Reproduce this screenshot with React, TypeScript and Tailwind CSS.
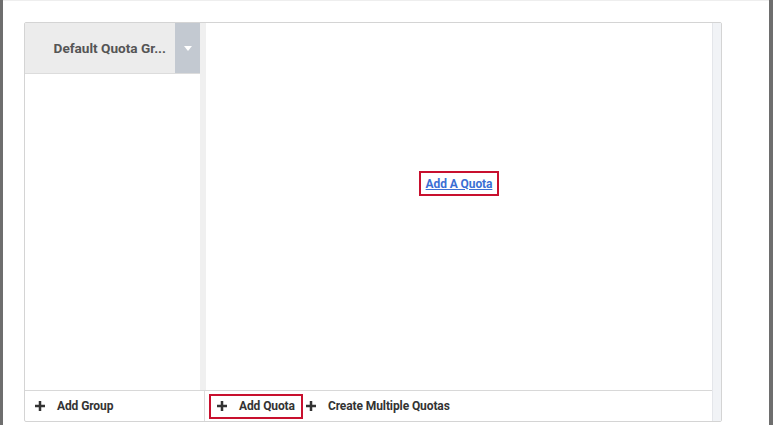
function PlusMark() {
  return (
    <svg width="10" height="10" viewBox="0 0 10 10" className="shrink-0">
      <rect x="3.75" y="0" width="2.5" height="10" fill="#333" />
      <rect x="0" y="3.75" width="10" height="2.5" fill="#333" />
    </svg>
  )
}

function FooterAction({ label, boxed }: { label: string; boxed?: boolean }) {
  return (
    <div
      className={
        boxed
          ? "flex items-center gap-[12px] h-[25px] px-[6px] border-2 border-[#c8102e]"
          : "flex items-center gap-[12px] h-[25px] px-[2px]"
      }
    >
      <PlusMark />
      <span className="text-[12px] font-bold text-[#333] tracking-[-0.1px]">{label}</span>
    </div>
  )
}

export default function App() {
  return (
    <div
      className="w-[773px] h-[425px] bg-[#6e6e6e] flex overflow-hidden"
      style={{ fontFamily: "Roboto, 'Liberation Sans', sans-serif" }}
    >
      {/* modal body */}
      <div className="ml-[3px] w-[766px] h-full bg-white border-t border-[#eeeeee] pl-[21px] pt-[21px]">
        <div className="w-[698px] h-[400px] border border-[#d4d4d4] rounded-[2px] flex">
          {/* groups + quotas */}
          <div className="flex-1 flex flex-col">
            <div className="flex flex-1 min-h-0">
              {/* group list */}
              <div className="w-[175px] flex flex-col">
                <div className="h-[51px] flex bg-[#ececec] border-b border-[#dcdcdc]">
                  <div className="flex-1 flex items-center justify-end pr-[9px] text-[13.6px] font-bold text-[#555]">
                    Default Quota Gr...
                  </div>
                  <div className="w-[25px] bg-[#c3c9d1] flex items-center justify-center">
                    <svg width="8" height="5" viewBox="0 0 8 5">
                      <path d="M0 0h8L4 5z" fill="#fff" />
                    </svg>
                  </div>
                </div>
                <div className="flex-1" />
              </div>
              <div className="w-[6px] bg-[#f0f0f0]" />
              {/* quota area */}
              <div className="flex-1 flex items-center justify-center pb-[46px]">
                <div className="border-2 border-[#c8102e] px-[5px] h-[25px] flex items-center">
                  <a className="text-[12px] font-bold text-[#3b6fd4] underline tracking-[-0.1px]">Add A Quota</a>
                </div>
              </div>
            </div>
            {/* footer */}
            <div className="h-[31px] flex border-t border-[#d8d8d8]">
              <div className="w-[180px] flex items-center pl-[8px] border-r border-[#dcdcdc]">
                <FooterAction label="Add Group" />
              </div>
              <div className="flex items-center pl-[4px] gap-[1px]">
                <FooterAction label="Add Quota" boxed />
                <FooterAction label="Create Multiple Quotas" />
              </div>
            </div>
          </div>
          {/* right strip */}
          <div className="w-[9px] bg-[#f1f3f6] border-l border-[#e4e6ea]" />
        </div>
      </div>
    </div>
  )
}
